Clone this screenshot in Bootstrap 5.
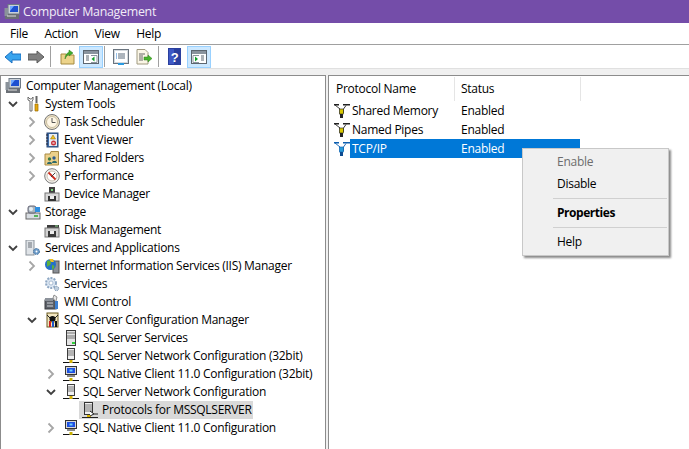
<!DOCTYPE html>
<html lang="en"><head><meta charset="utf-8"><title>Computer Management</title>
<link href="https://cdn.jsdelivr.net/npm/bootstrap@5.3.0/dist/css/bootstrap.min.css" rel="stylesheet">
<style>
html,body{height:449px;overflow:hidden}
body{font-family:"Open Sans","Noto Sans",sans-serif;font-size:12px;letter-spacing:-.27px;color:#000;background:#f0f0f0;line-height:18px;position:relative}
svg{display:block;flex:none}
.win-title{height:23px;background:#744da9;color:#f1ecf7;padding-left:4px;gap:3px;font-size:12.4px}
.win-menu{height:22px;background:#fff;border-bottom:1px solid #a0a0a0;padding-left:10px}
.win-menu span{margin-right:16.5px}
.win-tools{height:24px;background:#fff;border-bottom:1px solid #e0e0e0;padding-left:5px}
.tool-sep{width:1px;height:21px;background:#a0a0a0}
.tool-on{width:24px;height:22px;background:#cce8ff;border:1px solid #99d1ff}
.tb-back{margin-right:7px}.tb-fwd{margin-right:6px}.tb-s1{margin-right:9px}.tb-up{margin-right:4px}.tb-g1{margin-right:1px}.tb-s2{margin-right:8px}.tb-prop{margin-right:7px}.tb-exp{margin-right:5px}.tb-s3{margin-right:9px}.tb-help{margin-right:6px}
.panes{height:374px;margin-top:6px;gap:2px}
.tree-pane{width:326px;background:#fff;border:1px solid #8c8c8c;border-width:1px 1px 0 1px;padding-top:1px;overflow:hidden}
.list-pane{flex:1;background:#fff;border:1px solid #8c8c8c;border-width:1px 0 0 1px;padding-top:1px}
.tree-row{height:18px;white-space:nowrap}
.chev{width:19px;height:18px}
.lv0{padding-left:4px}.lv1{padding-left:5px}.lv2{padding-left:24px}.lv3{padding-left:43px}.lv4{padding-left:62px}
.tree-icon{margin-right:4px}
.lv0 .tree-icon{margin-right:5px}
.cell-on{background:#d9d9d9;height:18px;padding-right:1px;margin-left:-3px;padding-left:3px}
.head-row{height:24px;width:252px}
.col-a{width:126px;padding-left:7px;border-right:1px solid #e5e5e5;height:24px}
.col-b{width:126px;padding-left:6px;border-right:1px solid #e5e5e5;height:24px}
.proto-row{height:19px;padding-left:5px;width:251px}
.proto-name{width:104px;padding-left:2px;height:19px}
.proto-stat{flex:1;padding-left:7px;height:19px}
.proto-on .proto-name,.proto-on .proto-stat{background:#0078d7;color:#fff}
.ctx-menu{position:absolute;left:522px;top:148px;width:147px;height:108px;background:#f0f0f0;border:1px solid #c8c8c8;box-shadow:2px 2px 2px #8a8a8a;padding:2px 0 0 0}
.ctx-item{padding-left:34px;height:22px}
.ctx-off{color:#6d6d6d}
.ctx-line{height:1px;background:#d0d0d0;margin:3px 1px 3px 30px}
.ctx-bold{font-weight:700;letter-spacing:-.45px}
</style></head><body>
<svg width="0" height="0" class="position-absolute">
<defs>
<symbol id="i-comp" viewBox="0 0 16 16"><rect x="4" y="0.500" width="11.500" height="9.500" fill="#c9d0d8" stroke="#6f7a86"/><rect x="6" y="2" width="8" height="6" fill="#1d4fd0"/><path d="M6 2h4l-4 5z" fill="#6fa8ff"/><rect x="1" y="10" width="14" height="5" fill="#6a6f75"/><rect x="0.500" y="4" width="3.500" height="8" fill="#8a929a"/><path d="M3 12h9" stroke="#ddd"/></symbol>
<symbol id="i-tools" viewBox="0 0 16 16"><path d="M3 1v3l2 1v10h2V5l1-1V1L6.500 3H5z" fill="#fff" stroke="#6a6a6a"/><path d="M11.500 0v7" stroke="#666" stroke-width="2"/><path d="M10 8h3v7h-3z" fill="#e6a80f" stroke="#9a6a00" stroke-width=".7"/></symbol>
<symbol id="i-clock" viewBox="0 0 16 16"><circle cx="8" cy="8" r="7.500" fill="#efe3c7" stroke="#777"/><circle cx="8" cy="8" r="5.500" fill="#fff7e6" stroke="#c8bda0"/><path d="M8 4v4.500h3.500" stroke="#555" fill="none"/></symbol>
<symbol id="i-event" viewBox="0 0 16 16"><rect x="3" y="1" width="11" height="14" fill="#3d6ca8" stroke="#2b4a78"/><rect x="5" y="2" width="8" height="12" fill="#e8edf5"/><path d="M2 3h2M2 6h2M2 9h2M2 12h2" stroke="#223"/><path d="M9 3l2.500 4h-5z" fill="#f0c020" stroke="#8a6a00" stroke-width=".5"/><circle cx="9.500" cy="11" r="2.500" fill="#c8323c"/><path d="M8.500 10l2 2M10.500 10l-2 2" stroke="#fff" stroke-width=".7"/></symbol>
<symbol id="i-share" viewBox="0 0 16 16"><path d="M1 4h5l1-2.500h7.500V15H1z" fill="#ecd08a" stroke="#a88a45"/><circle cx="5.500" cy="9" r="1.700" fill="#3c7a4a"/><circle cx="10" cy="8" r="1.700" fill="#2f5c8f"/><path d="M3 14c0-3 5-3 5 0zM8 13c0-3 5-3 5 0z" fill="#2f6a6a"/></symbol>
<symbol id="i-perf" viewBox="0 0 16 16"><circle cx="8" cy="8" r="7.300" fill="#f4f2ee" stroke="#7a7a7a"/><circle cx="8" cy="8" r="5" fill="#fff" stroke="#c8c0b0"/><path d="M4.500 4.500l7 7" stroke="#cc2a1e" stroke-width="1.800"/><path d="M11 5L7 9" stroke="#444"/></symbol>
<symbol id="i-dev" viewBox="0 0 16 16"><rect x="5" y="1" width="6" height="6" fill="#3f3f3f"/><rect x="7" y="3" width="2" height="2" fill="#7fd67f"/><rect x="1" y="7" width="14" height="8" fill="#d9d9d9" stroke="#777"/><rect x="4" y="10" width="8" height="5" fill="#333"/><rect x="6" y="10" width="4" height="3" fill="#eee"/></symbol>
<symbol id="i-store" viewBox="0 0 16 16"><rect x="1" y="9" width="14" height="6" fill="#d8dde2" stroke="#666"/><rect x="9" y="11" width="4" height="2" fill="#55b35a"/><rect x="3" y="2" width="8" height="7" rx="2" fill="#a9b4bc" stroke="#667"/><circle cx="6" cy="5" r="2" fill="#e8eef2"/><rect x="10" y="3" width="5" height="5" fill="#2f8fe0"/></symbol>
<symbol id="i-disk" viewBox="0 0 16 16"><rect x="3" y="3" width="12" height="3" fill="#3b3b3b"/><path d="M11 4h3" stroke="#8fe08f"/><rect x="1" y="6" width="14" height="9" fill="#d2d2d2" stroke="#777"/><rect x="4" y="9" width="8" height="6" fill="#3a3a3a"/><rect x="6" y="9" width="4" height="3" fill="#eee"/></symbol>
<symbol id="i-svcapp" viewBox="0 0 16 16"><rect x="1" y="0" width="8" height="15" fill="#dfe3e7" stroke="#8a929a"/><path d="M3 3h4M3 5h4M3 7h4" stroke="#6a7078"/><circle cx="11.500" cy="11.500" r="3" fill="#6d9bc8" stroke="#3f6d99" stroke-dasharray="1.500 1"/><circle cx="11.500" cy="11.500" r="1" fill="#fff"/></symbol>
<symbol id="i-iis" viewBox="0 0 16 16"><rect x="9" y="3" width="6" height="12" fill="#8a8f96" stroke="#555"/><circle cx="6.500" cy="6.500" r="5.500" fill="#2570c8"/><path d="M3 3c2-1 4 0 4 2s-3 3-4 4zM8 7c2 0 3 1 2 3l-2 2z" fill="#5cb03c"/><path d="M5 1h4l1 3-3 0z" fill="#f0c020"/></symbol>
<symbol id="i-gear" viewBox="0 0 16 16"><circle cx="7" cy="7" r="5" fill="#dbe6f2" stroke="#8fa8c4" stroke-width="2" stroke-dasharray="2 1.200"/><circle cx="7" cy="7" r="2" fill="#fff" stroke="#8fa8c4" stroke-width=".7"/><circle cx="12.500" cy="12.500" r="2.200" fill="#c0d0e0" stroke="#6f8aa8" stroke-dasharray="1 .8"/></symbol>
<symbol id="i-wmi" viewBox="0 0 16 16"><rect x="1" y="6" width="10" height="9" fill="#5c6068" stroke="#3a3c40"/><rect x="1" y="4" width="8" height="3" fill="#8d939b"/><path d="M3 9h6M3 12h6" stroke="#cfd3d8"/><path d="M10 1l3 2-1 4 1 8h-2l0-8-2-3z" fill="#e8e8e8" stroke="#6a6a6a" stroke-width=".7"/><rect x="11" y="7" width="3" height="8" fill="#3d7fd0"/></symbol>
<symbol id="i-sqlcfg" viewBox="0 0 16 16"><rect x="3" y="1" width="11" height="14" fill="#f2e6c0" stroke="#6a5a20"/><path d="M3 3l3 3M14 3l-3 3" stroke="#222"/><circle cx="8.500" cy="7" r="3" fill="#111"/><path d="M5 10h7" stroke="#c9a000"/><rect x="5" y="9" width="2" height="6" fill="#c22"/><rect x="8" y="9" width="2" height="6" fill="#1c55c8"/><rect x="11" y="9" width="2" height="6" fill="#111"/></symbol>
<symbol id="i-tower" viewBox="0 0 16 16"><rect x="3.500" y="0.500" width="9" height="15" fill="#e4e4e4" stroke="#3c3c3c"/><path d="M4 3h8M4 6h8M4 8h8" stroke="#777"/><rect x="9" y="12" width="3" height="2" fill="#2fd03a"/></symbol>
<symbol id="i-netsrv" viewBox="0 0 16 16"><rect x="4.500" y="0.500" width="7" height="11" fill="#f0f0f0" stroke="#3c3c3c"/><path d="M5 3h6M5 5h6M5 7h6" stroke="#777"/><rect x="6.500" y="12" width="3" height="3" fill="#d8b400"/><rect x="0" y="14" width="6.500" height="1" fill="#111"/><rect x="9.500" y="14" width="6.500" height="1" fill="#111"/></symbol>
<symbol id="i-client" viewBox="0 0 16 16"><rect x="2.500" y="0.500" width="11" height="8" fill="#d8d8d8" stroke="#333"/><rect x="4" y="2" width="8" height="5" fill="#1d4fe0"/><rect x="6.500" y="3.500" width="3" height="2" fill="#6fd0ff"/><rect x="4" y="9" width="8" height="2" fill="#888"/><rect x="6.500" y="12" width="3" height="3" fill="#c9b000"/><rect x="0" y="14" width="6.500" height="1" fill="#111"/><rect x="9.500" y="14" width="6.500" height="1" fill="#111"/></symbol>
<symbol id="i-proto" viewBox="0 0 16 16"><rect x="2.500" y="0.500" width="8" height="12" fill="#f0f0f0" stroke="#333"/><path d="M3 3h7M3 5h7M3 7h7M3 9h7" stroke="#777"/><rect x="5" y="13" width="4" height="2" fill="#d8b400"/><path d="M0 15.500h16" stroke="#222"/><path d="M8 9l4 3-4 2" stroke="#222" fill="#fff"/><path d="M12 12h4" stroke="#222"/></symbol>
<symbol id="i-pipe" viewBox="0 0 16 16"><rect x="0" y="1" width="5" height="1.500" fill="#222"/><rect x="9" y="1" width="7" height="1.500" fill="#222"/><path d="M1 2l5 4v4M12 2.500L9.500 6v4" stroke="#222" stroke-width=".9" fill="none"/><rect x="5.500" y="6" width="4" height="5" fill="#d8c800" stroke="#222" stroke-width=".6"/><rect x="6" y="11" width="3" height="4" fill="#222"/></symbol>
<symbol id="i-pipe-on" viewBox="0 0 16 16"><rect x="0" y="1" width="5" height="1.500" fill="#0c5fb0"/><rect x="9" y="1" width="7" height="1.500" fill="#0c5fb0"/><path d="M1 2l5 4v4M12 2.500L9.500 6v4" stroke="#0c5fb0" stroke-width=".9" fill="none"/><rect x="5.500" y="6" width="4" height="5" fill="#2a9ad8" stroke="#0c5fb0" stroke-width=".6"/><rect x="6" y="11" width="3" height="4" fill="#0c4a90"/></symbol>
<symbol id="c-r" viewBox="0 0 19 18"><path d="M4.500 4.500l4.500 4.500-4.500 4.500" fill="none" stroke="#a6a6a6" stroke-width="1.800"/></symbol>
<symbol id="c-d" viewBox="0 0 19 18"><path d="M3 7l4 4 4-4" fill="none" stroke="#404040" stroke-width="1.800"/></symbol>
</defs>
</svg>

<div class="win-title d-flex align-items-center"><svg width="16" height="16"><use href="#i-comp"/></svg><span>Computer Management</span></div>
<div class="win-menu d-flex align-items-center"><span>File</span><span>Action</span><span>View</span><span>Help</span></div>
<div class="win-tools d-flex align-items-center">
<svg class="tb-back" width="16" height="14" viewBox="0 0 16 14"><path d="M0 7l7-6v3h9v6H7v3z" fill="#39a4ee" stroke="#1b6fc0"/></svg>
<svg class="tb-fwd" width="16" height="14" viewBox="0 0 16 14"><path d="M16 7L9 1v3H0v6h9v3z" fill="#808080" stroke="#5a5a5a"/></svg>
<div class="tool-sep tb-s1"></div>
<svg class="tb-up" width="15" height="16" viewBox="0 0 15 16"><path d="M1 5h5l1 1h7v9H1z" fill="#ecd38a" stroke="#a58a40"/><path d="M5 10c0-4 2-6 4-7V1l4 3-4 3V5c-2 1-3 3-4 5z" fill="#3fae2a" stroke="#2a7a1c" stroke-width=".5"/></svg>
<div class="tool-on tb-g1 d-flex align-items-center justify-content-center"><svg width="16" height="14" viewBox="0 0 16 14"><rect x=".5" y=".5" width="15" height="13" fill="#fff" stroke="#5c6670"/><rect x="1" y="1" width="14" height="3" fill="#8a949e"/><path d="M8 5.500h6v7H8" fill="#fff" stroke="#8a949e"/><path d="M11.500 6.500v5L8.500 9z" fill="#12a02c"/><path d="M3 6h3M3 8h3M3 10h3" stroke="#5c6670"/></svg></div>
<div class="tool-sep tb-s2"></div>
<svg class="tb-prop" width="16" height="16" viewBox="0 0 16 16"><rect x=".5" y=".5" width="15" height="14" fill="#d5dadf" stroke="#6a747e"/><rect x="2" y="2" width="12" height="11" fill="#fff"/><path d="M5 5h7M5 7h7M5 9h7" stroke="#5a6a7a"/><path d="M3 5h1M3 7h1M3 9h1" stroke="#2a7fd0"/><rect x="5" y="14" width="6" height="2" fill="#2a9ae0"/></svg>
<svg class="tb-exp" width="17" height="16" viewBox="0 0 17 16"><path d="M1 .5h8l3 3V15H1z" fill="#fbf6e6" stroke="#a09a80"/><path d="M3 5h6M3 7h4M3 9h4M3 11h4" stroke="#666"/><path d="M8 8h4V6l4 3.500-4 3.500v-2H8z" fill="#49b52c" stroke="#2e7e1a" stroke-width=".5"/></svg>
<div class="tool-sep tb-s3"></div>
<svg class="tb-help" width="13" height="17" viewBox="0 0 13 17"><rect width="13" height="17" fill="#2a3f9e"/><path d="M1 1h5v15H1z" fill="#3e58c4"/><text x="6.500" y="13.500" font-family="Liberation Sans" font-size="13" font-weight="700" fill="#fff" text-anchor="middle">?</text></svg>
<div class="tool-on tb-g2 d-flex align-items-center justify-content-center"><svg width="16" height="14" viewBox="0 0 16 14"><rect x=".5" y=".5" width="15" height="13" fill="#fff" stroke="#5c6670"/><rect x="1" y="1" width="14" height="3" fill="#8a949e"/><path d="M8 5.500H2v7h6" fill="#fff" stroke="#8a949e"/><path d="M4 6.500v5L7 9z" fill="#12a02c"/><path d="M10 6h3M10 8h3M10 10h3" stroke="#5c6670"/></svg></div>
</div>

<div class="panes d-flex">
<div class="tree-pane">
<div class="tree-row lv0 d-flex align-items-center"><svg class="tree-icon" width="16" height="16"><use href="#i-comp"/></svg>Computer Management (Local)</div>
<div class="tree-row lv1 d-flex align-items-center"><svg class="chev" width="19" height="18"><use href="#c-d"/></svg><svg class="tree-icon" width="16" height="16"><use href="#i-tools"/></svg>System Tools</div>
<div class="tree-row lv2 d-flex align-items-center"><svg class="chev" width="19" height="18"><use href="#c-r"/></svg><svg class="tree-icon" width="16" height="16"><use href="#i-clock"/></svg>Task Scheduler</div>
<div class="tree-row lv2 d-flex align-items-center"><svg class="chev" width="19" height="18"><use href="#c-r"/></svg><svg class="tree-icon" width="16" height="16"><use href="#i-event"/></svg>Event Viewer</div>
<div class="tree-row lv2 d-flex align-items-center"><svg class="chev" width="19" height="18"><use href="#c-r"/></svg><svg class="tree-icon" width="16" height="16"><use href="#i-share"/></svg>Shared Folders</div>
<div class="tree-row lv2 d-flex align-items-center"><svg class="chev" width="19" height="18"><use href="#c-r"/></svg><svg class="tree-icon" width="16" height="16"><use href="#i-perf"/></svg>Performance</div>
<div class="tree-row lv2 d-flex align-items-center"><span class="chev"></span><svg class="tree-icon" width="16" height="16"><use href="#i-dev"/></svg>Device Manager</div>
<div class="tree-row lv1 d-flex align-items-center"><svg class="chev" width="19" height="18"><use href="#c-d"/></svg><svg class="tree-icon" width="16" height="16"><use href="#i-store"/></svg>Storage</div>
<div class="tree-row lv2 d-flex align-items-center"><span class="chev"></span><svg class="tree-icon" width="16" height="16"><use href="#i-disk"/></svg>Disk Management</div>
<div class="tree-row lv1 d-flex align-items-center"><svg class="chev" width="19" height="18"><use href="#c-d"/></svg><svg class="tree-icon" width="16" height="16"><use href="#i-svcapp"/></svg>Services and Applications</div>
<div class="tree-row lv2 d-flex align-items-center"><svg class="chev" width="19" height="18"><use href="#c-r"/></svg><svg class="tree-icon" width="16" height="16"><use href="#i-iis"/></svg>Internet Information Services (IIS) Manager</div>
<div class="tree-row lv2 d-flex align-items-center"><span class="chev"></span><svg class="tree-icon" width="16" height="16"><use href="#i-gear"/></svg>Services</div>
<div class="tree-row lv2 d-flex align-items-center"><span class="chev"></span><svg class="tree-icon" width="16" height="16"><use href="#i-wmi"/></svg>WMI Control</div>
<div class="tree-row lv2 d-flex align-items-center"><svg class="chev" width="19" height="18"><use href="#c-d"/></svg><svg class="tree-icon" width="16" height="16"><use href="#i-sqlcfg"/></svg>SQL Server Configuration Manager</div>
<div class="tree-row lv3 d-flex align-items-center"><span class="chev"></span><svg class="tree-icon" width="16" height="16"><use href="#i-tower"/></svg>SQL Server Services</div>
<div class="tree-row lv3 d-flex align-items-center"><span class="chev"></span><svg class="tree-icon" width="16" height="16"><use href="#i-netsrv"/></svg>SQL Server Network Configuration (32bit)</div>
<div class="tree-row lv3 d-flex align-items-center"><svg class="chev" width="19" height="18"><use href="#c-r"/></svg><svg class="tree-icon" width="16" height="16"><use href="#i-client"/></svg>SQL Native Client 11.0 Configuration (32bit)</div>
<div class="tree-row lv3 d-flex align-items-center"><svg class="chev" width="19" height="18"><use href="#c-d"/></svg><svg class="tree-icon" width="16" height="16"><use href="#i-netsrv"/></svg>SQL Server Network Configuration</div>
<div class="tree-row lv4 d-flex align-items-center"><span class="chev"></span><div class="cell-on d-flex align-items-center"><svg class="tree-icon" width="16" height="16"><use href="#i-proto"/></svg>Protocols for MSSQLSERVER</div></div>
<div class="tree-row lv3 d-flex align-items-center"><svg class="chev" width="19" height="18"><use href="#c-r"/></svg><svg class="tree-icon" width="16" height="16"><use href="#i-client"/></svg>SQL Native Client 11.0 Configuration</div>
</div>
<div class="list-pane">
<div class="head-row d-flex"><div class="col-a d-flex align-items-center">Protocol Name</div><div class="col-b d-flex align-items-center">Status</div></div>
<div class="proto-row d-flex align-items-center"><svg width="16" height="16"><use href="#i-pipe"/></svg><div class="proto-name d-flex align-items-center">Shared Memory</div><div class="proto-stat d-flex align-items-center">Enabled</div></div>
<div class="proto-row d-flex align-items-center"><svg width="16" height="16"><use href="#i-pipe"/></svg><div class="proto-name d-flex align-items-center">Named Pipes</div><div class="proto-stat d-flex align-items-center">Enabled</div></div>
<div class="proto-row proto-on d-flex align-items-center"><svg width="16" height="16"><use href="#i-pipe-on"/></svg><div class="proto-name d-flex align-items-center">TCP/IP</div><div class="proto-stat d-flex align-items-center">Enabled</div></div>
</div>
</div>

<div class="ctx-menu">
<div class="ctx-item ctx-off d-flex align-items-center">Enable</div>
<div class="ctx-item d-flex align-items-center">Disable</div>
<div class="ctx-line"></div>
<div class="ctx-item ctx-bold d-flex align-items-center">Properties</div>
<div class="ctx-line"></div>
<div class="ctx-item d-flex align-items-center">Help</div>
</div>
</body></html>
